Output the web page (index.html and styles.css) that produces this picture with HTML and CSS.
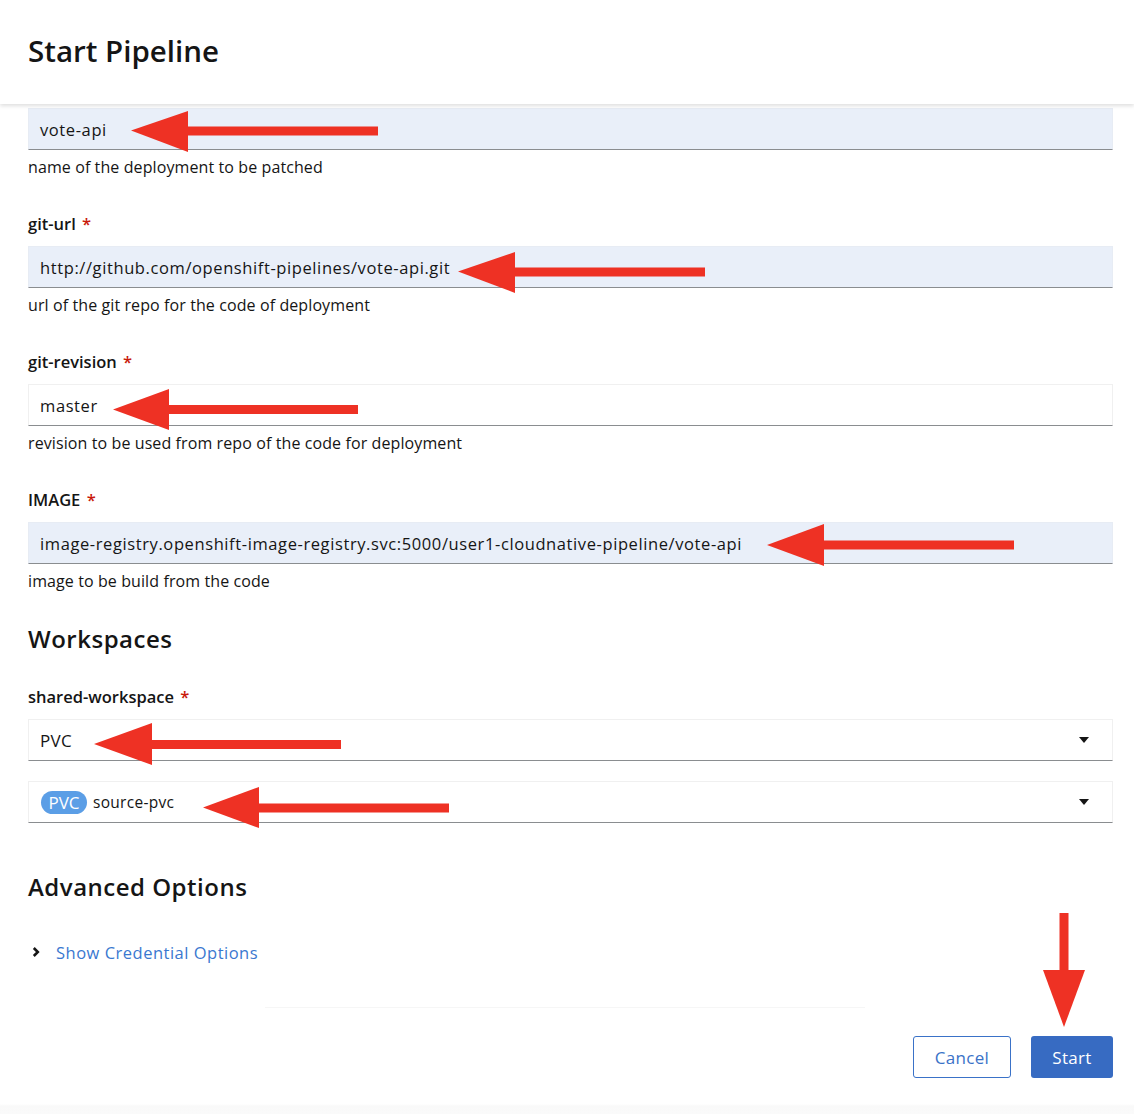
FILE: index.html
```html
<!DOCTYPE html>
<html lang="en">
<head>
<meta charset="utf-8">
<title>Start Pipeline</title>
<link rel="stylesheet" href="styles.css">
</head>
<body>
<div class="modal">
  <header class="modal-header">
    <h1 class="modal-title">Start Pipeline</h1>
  </header>
  <main class="modal-body">
    <div class="field first">
      <div class="input filled">vote-api</div>
      <div class="helper">name of the deployment to be patched</div>
    </div>
    <div class="field">
      <div class="label">git-url <span class="req">*</span></div>
      <div class="input filled">http://github.com/openshift-pipelines/vote-api.git</div>
      <div class="helper">url of the git repo for the code of deployment</div>
    </div>
    <div class="field">
      <div class="label">git-revision <span class="req">*</span></div>
      <div class="input">master</div>
      <div class="helper">revision to be used from repo of the code for deployment</div>
    </div>
    <div class="field">
      <div class="label">IMAGE <span class="req">*</span></div>
      <div class="input filled">image-registry.openshift-image-registry.svc:5000/user1-cloudnative-pipeline/vote-api</div>
      <div class="helper">image to be build from the code</div>
    </div>

    <h2 class="section-title workspaces">Workspaces</h2>
    <div class="field ws">
      <div class="label">shared-workspace <span class="req">*</span></div>
      <div class="select">
        <span class="select-text">PVC</span>
        <span class="caret"></span>
      </div>
      <div class="select second">
        <span class="select-text small"><span class="badge">PVC</span>source-pvc</span>
        <span class="caret"></span>
      </div>
    </div>

    <h2 class="section-title advanced">Advanced Options</h2>
    <div class="expander">
      <svg class="chev" width="10" height="12" viewBox="0 0 10 12"><path d="M2.8 2 L6.8 6 L2.8 10" fill="none" stroke="#151515" stroke-width="2.6"/></svg>
      <span class="link">Show Credential Options</span>
    </div>
  </main>
  <div class="fade-line"></div>
  <footer class="modal-footer">
    <button class="btn btn-secondary">Cancel</button>
    <button class="btn btn-primary">Start</button>
  </footer>
</div>

<svg class="annotations" width="1134" height="1114" viewBox="0 0 1134 1114">
  <g fill="#ee3124">
    <polygon points="131,130.5 188,111 188,152"/>
    <rect x="186" y="126.5" width="192" height="9"/>

    <polygon points="458,271.5 515,252 515,293"/>
    <rect x="513" y="267.5" width="192" height="9"/>

    <polygon points="113,409.5 169,389 169,430"/>
    <rect x="167" y="405" width="191" height="9"/>

    <polygon points="767,545 824,524 824,566"/>
    <rect x="822" y="540.5" width="192" height="9"/>

    <polygon points="94,744 152,723 152,765"/>
    <rect x="150" y="740" width="191" height="9"/>

    <polygon points="203,807.5 259,787 259,828"/>
    <rect x="257" y="803.5" width="192" height="9"/>

    <rect x="1059.5" y="913" width="9" height="60"/>
    <polygon points="1043,970 1085,970 1064,1027"/>
  </g>
</svg>
</body>
</html>
```

FILE: styles.css
```css
* { box-sizing: border-box; }

html, body {
  margin: 0;
  padding: 0;
  background: #ffffff;
}

body {
  font-family: "Open Sans", "Noto Sans", "Liberation Sans", sans-serif;
  color: #151515;
  width: 1134px;
  height: 1114px;
  overflow: hidden;
  position: relative;
}

.modal {
  display: flex;
  flex-direction: column;
  height: 1114px;
  background: linear-gradient(#ffffff 0, #ffffff 1104px, #f9f9f9 1106px, #fafafa 1114px);
}

.modal-header {
  height: 104px;
  padding: 0 28px;
  display: flex;
  align-items: center;
  background: #ffffff;
  box-shadow: 0 2px 4px rgba(0, 0, 0, 0.13);
  position: relative;
  z-index: 1;
}

.modal-title {
  margin: 0;
  font-size: 29.5px;
  font-weight: 600;
  letter-spacing: 0;
  line-height: 36px;
  padding-bottom: 2px;
}

.modal-body {
  padding: 4px 21px 0 28px;
  display: flex;
  flex-direction: column;
}

.field {
  display: flex;
  flex-direction: column;
  margin-top: 33px;
}

.field.first { margin-top: 0; }

.label {
  font-size: 16.5px;
  font-weight: 600;
  line-height: 24px;
  margin-bottom: 10px;
}

.req {
  color: #c9190b;
  margin-left: 2px;
  font-weight: 600;
}

.input {
  height: 42px;
  padding: 0 11px;
  display: flex;
  align-items: center;
  font-size: 16.5px;
  letter-spacing: 0.6px;
  border: 1px solid #f0f0f0;
  border-bottom-color: #8a8d90;
  background: #ffffff;
  white-space: nowrap;
}

.input.filled {
  background: #e9eff9;
  border-color: #e7ecf4;
  border-bottom-color: #8a8d90;
}

.helper {
  font-size: 16px;
  letter-spacing: 0.1px;
  line-height: 24px;
  margin-top: 5px;
}

.section-title {
  margin: 0;
  font-size: 24px;
  font-weight: 600;
  line-height: 30px;
  letter-spacing: 0.5px;
}

.section-title.workspaces { margin-top: 31px; }

.field.ws { margin-top: 31px; }

.select {
  height: 42px;
  padding: 0 23px 0 11px;
  display: flex;
  align-items: center;
  justify-content: space-between;
  border: 1px solid #f0f0f0;
  border-bottom-color: #8a8d90;
  font-size: 17px;
  letter-spacing: 0.3px;
}

.select.second { margin-top: 20px; }

.select-text { display: flex; align-items: center; }

.select-text.small { font-size: 15.5px; letter-spacing: 0.3px; }

.badge {
  display: inline-flex;
  align-items: center;
  justify-content: center;
  height: 23px;
  width: 46px;
  border-radius: 12px;
  background: #5b9ee6;
  color: #ffffff;
  font-size: 17px;
  letter-spacing: 0;
  margin-left: 1px;
  margin-right: 6px;
}

.caret {
  width: 0;
  height: 0;
  border-left: 5.5px solid transparent;
  border-right: 5.5px solid transparent;
  border-top: 6px solid #151515;
}

.section-title.advanced { margin-top: 49px; }

.expander {
  margin-top: 38px;
  display: flex;
  align-items: center;
  height: 24px;
  padding-left: 3px;
}

.chev { margin-right: 15px; }

.link {
  color: #3a78d0;
  font-size: 16.5px;
  letter-spacing: 0.5px;
}

.fade-line {
  margin: 43px 0 0 265px;
  width: 600px;
  height: 1px;
  background: #f6f6f6;
}

.modal-footer {
  margin-top: 28px;
  padding-right: 21px;
  display: flex;
  justify-content: flex-end;
  gap: 20px;
}

.btn {
  height: 42px;
  border-radius: 3px;
  font-family: inherit;
  font-size: 17px;
  letter-spacing: 0.3px;
  padding: 0;
  display: inline-flex;
  align-items: center;
  justify-content: center;
}

.btn-secondary {
  width: 98px;
  background: #ffffff;
  color: #3a72c8;
  border: 1.5px solid #3a72c8;
}

.btn-primary {
  width: 82px;
  background: #376bc2;
  color: #ffffff;
  border: none;
}

.annotations {
  position: absolute;
  top: 0;
  left: 0;
  pointer-events: none;
  z-index: 5;
}
```
